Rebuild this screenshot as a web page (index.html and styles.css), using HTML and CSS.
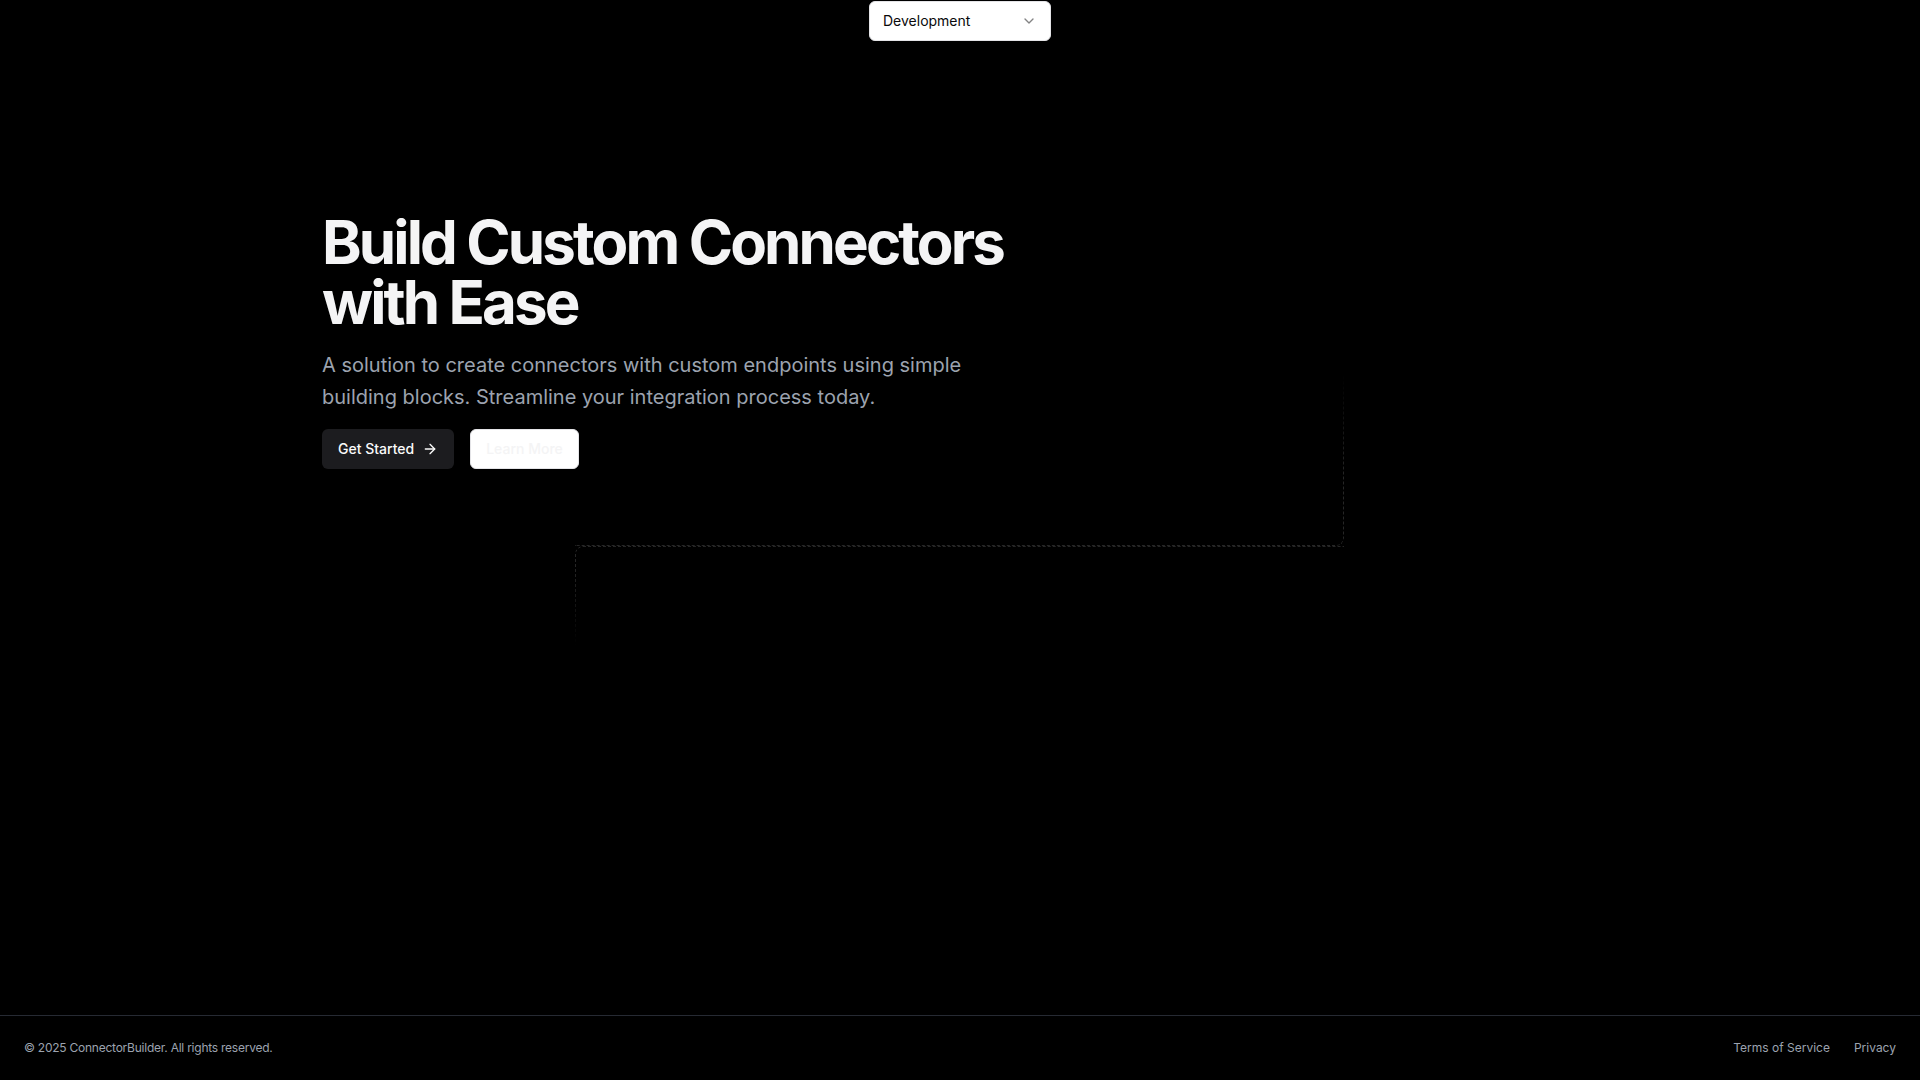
FILE: index.html
```html
<!DOCTYPE html>
<html lang="en">
<head>
<meta charset="utf-8">
<title>ConnectorBuilder</title>
<link rel="stylesheet" href="styles.css">
</head>
<body>
<div class="page">
  <main class="main">
    <div class="env-bar">
      <button class="env-select" type="button">
        <span>Development</span>
        <svg class="chev" width="16" height="16" viewBox="0 0 24 24" fill="none" stroke="currentColor" stroke-width="2" stroke-linecap="round" stroke-linejoin="round"><path d="m6 9 6 6 6-6"/></svg>
      </button>
    </div>
    <div class="deco deco-a" aria-hidden="true"></div>
    <div class="deco deco-b" aria-hidden="true"></div>
    <section class="hero">
      <h1 class="title">Build Custom Connectors with Ease</h1>
      <p class="lead">A solution to create connectors with custom endpoints using simple building blocks. Streamline your integration process today.</p>
      <div class="actions">
        <button class="btn btn-primary" type="button">
          <span>Get Started</span>
          <svg width="16" height="16" viewBox="0 0 24 24" fill="none" stroke="currentColor" stroke-width="2" stroke-linecap="round" stroke-linejoin="round"><path d="M5 12h14"/><path d="m12 5 7 7-7 7"/></svg>
        </button>
        <button class="btn btn-outline" type="button">Learn More</button>
      </div>
    </section>
  </main>
  <footer class="footer">
    <p class="copy">© 2025 ConnectorBuilder. All rights reserved.</p>
    <nav class="links">
      <a href="#">Terms of Service</a>
      <a href="#">Privacy</a>
    </nav>
  </footer>
</div>
</body>
</html>
```
FILE: styles.css
```css
* { box-sizing: border-box; }
html, body { margin: 0; padding: 0; }
body {
  background: #000;
  color: #f4f4f5;
  font-family: Inter, "Noto Sans", "Liberation Sans", sans-serif;
  -webkit-font-smoothing: antialiased;
}
.page {
  min-height: 100vh;
  display: flex;
  flex-direction: column;
}
.main {
  flex: 1;
  position: relative;
  overflow: hidden;
}
.env-bar {
  display: flex;
  justify-content: center;
  padding-top: 1px;
  position: relative;
  z-index: 2;
}
.env-select {
  width: 182px;
  height: 40px;
  display: flex;
  align-items: center;
  justify-content: space-between;
  padding: 0 13px 0 13px;
  background: #fff;
  color: #09090b;
  border: 1px solid #e4e4e7;
  border-radius: 6px;
  font-family: inherit;
  font-size: 14px;
  line-height: 20px;
}
.chev { opacity: 0.5; color: #09090b; }

.deco {
  position: absolute;
  pointer-events: none;
  border-color: #262626;
  border-style: dashed;
  border-width: 0;
}
.deco-a {
  left: 575px;
  top: 200px;
  width: 769px;
  height: 346px;
  border-right-width: 1px;
  border-bottom-width: 1px;
  border-bottom-right-radius: 8px;
  -webkit-mask-image: linear-gradient(to bottom, transparent 50%, #000 80%);
  mask-image: linear-gradient(to bottom, transparent 50%, #000 80%);
}
.deco-b {
  left: 575px;
  top: 546px;
  width: 769px;
  height: 100px;
  border-left-width: 1px;
  border-top-width: 1px;
  border-top-left-radius: 8px;
  -webkit-mask-image: linear-gradient(to bottom, #000 20%, transparent 100%);
  mask-image: linear-gradient(to bottom, #000 20%, transparent 100%);
}

.hero {
  position: relative;
  z-index: 1;
  max-width: 1276px;
  margin: 171px auto 0;
}
.title {
  margin: 0;
  max-width: 720px;
  font-size: 60px;
  line-height: 60px;
  font-weight: 700;
  letter-spacing: -0.048em;
  color: #f4f4f5;
}
.lead {
  margin: 17px 0 0;
  max-width: 680px;
  font-size: 20px;
  line-height: 32px;
  color: #9ca3af;
}
.actions {
  margin-top: 16px;
  display: flex;
  gap: 16px;
}
.btn {
  height: 40px;
  display: inline-flex;
  align-items: center;
  gap: 8px;
  padding: 0 16px;
  border-radius: 6px;
  font-family: inherit;
  font-size: 14px;
  font-weight: 500;
  line-height: 20px;
  white-space: nowrap;
  cursor: pointer;
}
.btn-primary {
  background: #1c1c1f;
  color: #fafafa;
  border: 0;
}
.btn-outline {
  justify-content: center;
  padding: 0 15px;
  background: #fff;
  color: #f4f4f5;
  border: 1px solid #e4e4e7;
}

.footer {
  height: 65px;
  border-top: 1px solid #262a33;
  display: flex;
  align-items: center;
  justify-content: space-between;
  padding: 0 24px;
  font-size: 12px;
  line-height: 16px;
  color: #9ca3af;
}
.copy { margin: 0; letter-spacing: -0.02em; }
.links {
  display: flex;
  gap: 24px;
}
.links a {
  color: #9ca3af;
  text-decoration: none;
}
```
